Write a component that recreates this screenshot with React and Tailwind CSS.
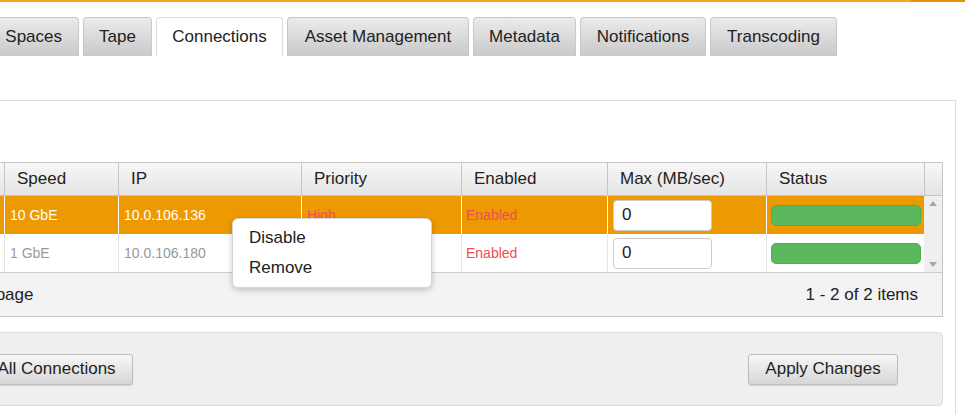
import React from 'react';

const tabs = [
  { label: 'Storage Spaces', w: 'w-[152px] justify-end pr-[16px]' },
  { label: 'Tape', w: 'w-[69px] justify-center' },
  { label: 'Connections', w: 'w-[127px] justify-center', active: true },
  { label: 'Asset Management', w: 'w-[182px] justify-center' },
  { label: 'Metadata', w: 'w-[103px] justify-center' },
  { label: 'Notifications', w: 'w-[126px] justify-center' },
  { label: 'Transcoding', w: 'w-[127px] justify-center' },
];

const rows = [
  { speed: '10 GbE', ip: '10.0.106.136', priority: 'High', enabled: 'Enabled', max: '0', selected: true },
  { speed: '1 GbE', ip: '10.0.106.180', priority: 'High', enabled: 'Enabled', max: '0' },
];

const cols = 'grid grid-cols-[190px_114px_183px_160px_146px_159px_158px]';

function Button({ children, className = '' }) {
  return (
    <button
      className={`h-[31px] rounded-[3px] border border-[#bdbdbd] bg-gradient-to-b from-[#f7f7f7] to-[#d6d6d6] text-[17px] text-[#222] shadow-[0_1px_1px_rgba(0,0,0,0.12)] ${className}`}
    >
      {children}
    </button>
  );
}

export default function App() {
  return (
    <div className="relative w-[965px] h-[414px] overflow-hidden bg-white font-['Liberation_Sans',Arial,sans-serif] text-[#222]">
      {/* top accent */}
      <div className="flex h-[2px]">
        <div className="flex-1 bg-[#f6a81c]" />
        <div className="w-[54px] bg-[#e88f0e]" />
      </div>

      <div className="ml-[-200px] w-[1156px]">
        {/* tabs */}
        <div className="mt-[15px] flex gap-[4px] pl-[127px]">
          {tabs.map((t) => (
            <div
              key={t.label}
              className={`${t.w} h-[39px] shrink-0 flex items-center whitespace-nowrap rounded-t-[4px] border border-b-0 text-[17px] ${
                t.active
                  ? 'bg-white border-[#dcdcdc]'
                  : 'bg-gradient-to-b from-[#ebebeb] to-[#c9c9c9] border-[#c8c8c8]'
              }`}
            >
              {t.label}
            </div>
          ))}
        </div>

        {/* panel */}
        <div className="mt-[44px] border border-[#dddddd] px-[12px] pt-[61px] pb-[20px]">
          <div className="border border-[#c5c5c5]">
            {/* header */}
            <div className="flex h-[33px] border-b border-[#c5c5c5] bg-gradient-to-b from-[#f7f7f7] to-[#e4e4e4] text-[17px]">
              <div className={`${cols} flex-1`}>
                <div />
                <div className="flex items-center px-3 border-l border-[#c5c5c5]">Speed</div>
                <div className="flex items-center px-3 border-l border-[#c5c5c5]">IP</div>
                <div className="flex items-center px-3 border-l border-[#c5c5c5]">Priority</div>
                <div className="flex items-center px-3 border-l border-[#c5c5c5]">Enabled</div>
                <div className="flex items-center px-3 border-l border-[#c5c5c5]">Max (MB/sec)</div>
                <div className="flex items-center px-3 border-l border-[#c5c5c5]">Status</div>
              </div>
              <div className="w-[18px] border-l border-[#c5c5c5]" />
            </div>

            {/* body */}
            <div className="flex">
              <div className="flex-1">
                {rows.map((r) => {
                  const sep = r.selected ? 'border-white' : 'border-[#e6e6e6]';
                  const txt = r.selected ? 'text-white' : 'text-[#999]';
                  return (
                    <div
                      key={r.ip}
                      className={`${cols} h-[38px] text-[14px] ${r.selected ? 'bg-[#ed9a02]' : 'bg-white'}`}
                    >
                      <div />
                      <div className={`flex items-center pl-[5px] border-l ${sep} ${txt}`}>{r.speed}</div>
                      <div className={`flex items-center pl-[5px] border-l ${sep} ${txt}`}>{r.ip}</div>
                      <div className={`flex items-center pl-[5px] border-l ${sep} text-[#f0505a]`}>{r.priority}</div>
                      <div className={`flex items-center pl-[4px] border-l ${sep} text-[#ee4c55]`}>{r.enabled}</div>
                      <div className={`flex items-center pl-[5px] border-l ${sep}`}>
                        <div className="w-[99px] h-[31px] flex items-center pl-[8px] rounded-[4px] border border-[#cccccc] bg-white text-[17px] text-[#222]">
                          {r.max}
                        </div>
                      </div>
                      <div className={`flex items-center pl-[4px] border-l ${sep}`}>
                        <div className="w-[150px] h-[21px] rounded-[5px] border border-[#4cae4c] bg-[#5cb85c]" />
                      </div>
                    </div>
                  );
                })}
              </div>
              <div className="w-[18px] bg-[#efefef] flex flex-col items-center justify-between py-[5px]">
                <svg width="8" height="5" viewBox="0 0 8 5"><path d="M0 5 L4 0 L8 5 Z" fill="#a8a8a8" /></svg>
                <svg width="8" height="5" viewBox="0 0 8 5"><path d="M0 0 L8 0 L4 5 Z" fill="#a8a8a8" /></svg>
              </div>
            </div>

            {/* pager */}
            <div className="flex h-[44px] items-center justify-between border-t border-[#cccccc] bg-[#f3f3f3] text-[17px]">
              <span className="ml-[107px]">items per page</span>
              <span className="mr-[24px]">1 - 2 of 2 items</span>
            </div>
          </div>

          {/* actions */}
          <div className="mt-[15px] h-[74px] flex items-center justify-between rounded-[4px] border border-[#dddddd] bg-[#efefef]">
            <Button className="ml-[99px] w-[220px]">Remove All Connections</Button>
            <Button className="mr-[44px] w-[150px]">Apply Changes</Button>
          </div>
        </div>
      </div>

      {/* context menu */}
      <div className="absolute left-[232px] top-[218px] w-[200px] h-[70px] pt-[4px] rounded-[6px] border border-[#d6d6d6] bg-white shadow-[0_2px_6px_rgba(0,0,0,0.22)] text-[17px]">
        <div className="h-[30px] flex items-center px-[16px]">Disable</div>
        <div className="h-[30px] flex items-center px-[16px]">Remove</div>
      </div>
    </div>
  );
}
